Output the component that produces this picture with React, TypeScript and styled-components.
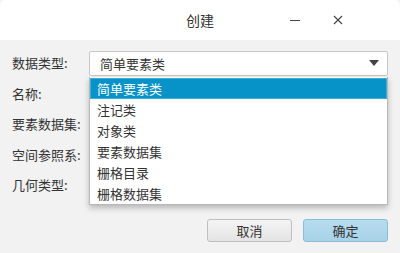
import React from 'react'
import styled, { createGlobalStyle } from 'styled-components'

const GlobalStyle = createGlobalStyle`
	html, body {
		margin: 0;
		padding: 0;
		background: #f2f2f2;
	}
	body {
		font-family: 'Noto Sans CJK SC', 'Noto Sans', sans-serif;
		font-size: 13px;
		color: #333;
	}
`

const $Window = styled.div`
	width: 400px;
	height: 253px;
	display: flex;
	flex-direction: column;
	background: #f2f2f2;
	overflow: hidden;
	position: relative;
`

const $TitleBar = styled.header`
	height: 40px;
	flex: none;
	background: #fff;
	display: grid;
	grid-template-columns: 1fr auto 1fr;
	align-items: center;
	border-radius: 5px 5px 0 0;
`

const $Title = styled.div`
	grid-column: 2;
	font-size: 14px;
	color: #333;
	line-height: 20px;
`

const $Controls = styled.div`
	grid-column: 3;
	justify-self: end;
	display: flex;
	padding-right: 41px;
`

const $ControlButton = styled.div`
	width: 43px;
	height: 40px;
	display: flex;
	align-items: center;
	justify-content: center;
	color: #444;
`

const $Body = styled.main`
	flex: 1;
	display: flex;
	flex-direction: column;
	padding: 8px 12px 11px 12px;
`

const $Form = styled.div`
	display: grid;
	grid-template-columns: 77px 1fr;
	grid-auto-rows: 30.5px;
	align-items: center;
`

const $Label = styled.div`
	line-height: 18px;
	color: #333;
`

const $Field = styled.div`
	position: relative;
	height: 25px;
`

const $Combo = styled.div`
	height: 25px;
	box-sizing: border-box;
	background: #fff;
	border: 1px solid #c8c8c8;
	border-radius: 2px;
	display: flex;
	align-items: center;
	justify-content: space-between;
	padding: 0 8px 0 10px;
`

const $Arrow = styled.span`
	width: 0;
	height: 0;
	border-left: 5px solid transparent;
	border-right: 5px solid transparent;
	border-top: 6px solid #444;
`

const $List = styled.ul`
	position: absolute;
	top: 26px;
	left: 0;
	right: 0;
	margin: 0;
	padding: 1px 0 0 0;
	list-style: none;
	background: #fff;
	border: 1px solid #b8b8b8;
	border-top: none;
	box-shadow: 0 3px 6px rgba(0, 0, 0, 0.25);
	z-index: 2;
`

const $Item = styled.li<{ $selected?: boolean }>`
	height: 21px;
	box-sizing: border-box;
	line-height: 19px;
	padding-left: 6px;
	border: 1px solid ${(p) => (p.$selected ? '#41addb' : 'transparent')};
	background: ${(p) => (p.$selected ? '#0893c8' : 'transparent')};
	color: ${(p) => (p.$selected ? '#fff' : '#333')};
`

const $Footer = styled.footer`
	margin-top: auto;
	display: flex;
	justify-content: flex-end;
	gap: 11px;
`

const $Button = styled.button<{ $primary?: boolean }>`
	width: 85px;
	height: 23px;
	box-sizing: border-box;
	font: inherit;
	font-size: 13px;
	color: #333;
	border-radius: 3px;
	border: 1px solid ${(p) => (p.$primary ? '#8bbdd6' : '#bfbfbf')};
	background: ${(p) =>
		p.$primary
			? 'linear-gradient(#b7dcee, #a7d2e8)'
			: 'linear-gradient(#f4f4f4, #e4e4e4)'};
	padding: 0;
`

const options = ['简单要素类', '注记类', '对象类', '要素数据集', '栅格目录', '栅格数据集']

function App() {
	return (
		<>
			<GlobalStyle />
			<$Window>
				<$TitleBar>
					<$Title>创建</$Title>
					<$Controls>
						<$ControlButton>
							<svg width="10" height="10" viewBox="0 0 10 10">
								<path d="M0 5.5h10" stroke="#444" strokeWidth="1" />
							</svg>
						</$ControlButton>
						<$ControlButton>
							<svg width="10" height="10" viewBox="0 0 10 10">
								<path d="M1 1l8 8M9 1l-8 8" stroke="#444" strokeWidth="1.1" />
							</svg>
						</$ControlButton>
					</$Controls>
				</$TitleBar>
				<$Body>
					<$Form>
						<$Label>数据类型:</$Label>
						<$Field>
							<$Combo>
								<span>简单要素类</span>
								<$Arrow />
							</$Combo>
							<$List>
								{options.map((o, i) => (
									<$Item key={o} $selected={i === 0}>
										{o}
									</$Item>
								))}
							</$List>
						</$Field>
						<$Label>名称:</$Label>
						<$Field />
						<$Label>要素数据集:</$Label>
						<$Field />
						<$Label>空间参照系:</$Label>
						<$Field />
						<$Label>几何类型:</$Label>
						<$Field />
					</$Form>
					<$Footer>
						<$Button>取消</$Button>
						<$Button $primary>确定</$Button>
					</$Footer>
				</$Body>
			</$Window>
		</>
	)
}

export default App
